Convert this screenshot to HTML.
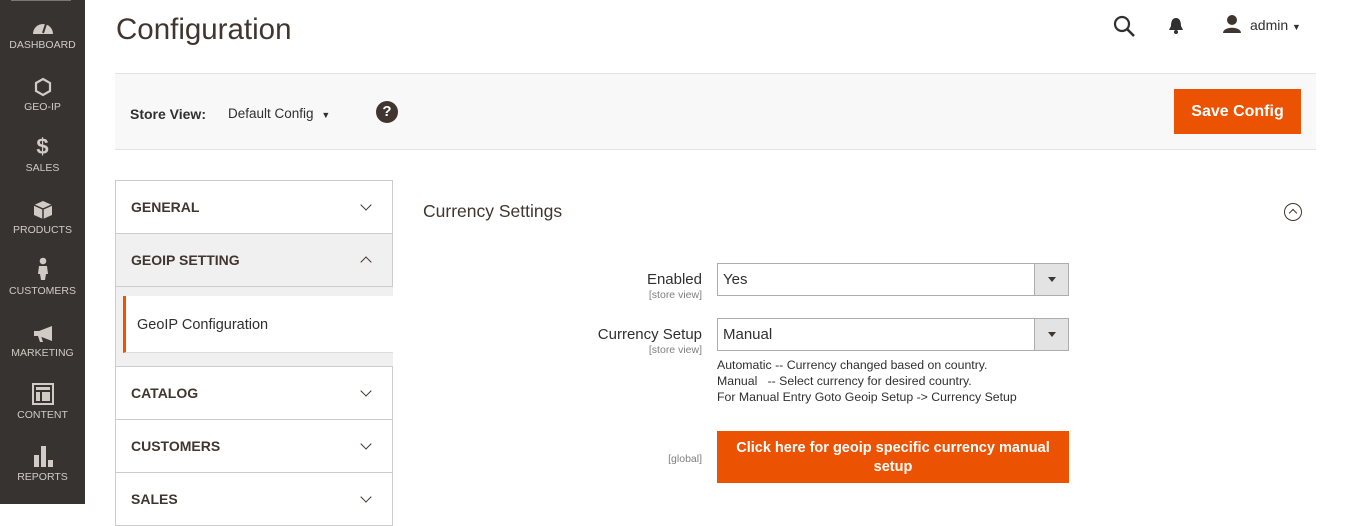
<!DOCTYPE html>
<html><head><meta charset="utf-8"><style>
*{box-sizing:border-box;margin:0;padding:0}
body{width:1349px;height:504px;overflow:hidden;background:#fff;font-family:"Liberation Sans",sans-serif;color:#303030;position:relative}
.side{position:absolute;left:0;top:0;width:85px;height:504px;background:#373330}
.side .top{position:absolute;left:11px;top:0;width:60px;height:1px;background:#777}
.nav{position:absolute;left:0;width:85px;text-align:center;color:#d0cbc5;font-size:10.5px}
.nav .ic{height:22px;display:flex;justify-content:center;align-items:flex-end;margin-bottom:4px}
h1{position:absolute;left:116px;top:13px;font-size:29.5px;font-weight:400;color:#41362f}
.bar{position:absolute;left:115px;top:73px;width:1201px;height:77px;background:#f8f8f8;border-top:1px solid #e3e3e3;border-bottom:1px solid #e3e3e3}
.btn{position:absolute;left:1174px;top:89px;width:127px;height:45px;background:#eb5202;color:#fff;font-weight:bold;font-size:16px;display:flex;align-items:center;justify-content:center}
.tabs{position:absolute;left:115px;top:180px;width:278px;border:1px solid #ccc;border-bottom:none}
.tab{height:53px;border-bottom:1px solid #ccc;font-weight:bold;font-size:14px;display:flex;align-items:center;padding-left:15px;position:relative;color:#41362f}
.tab .ch{position:absolute;right:22px;top:20px;width:8px;height:8px;border-right:1.5px solid #41362f;border-bottom:1.5px solid #41362f;transform:rotate(45deg)}
.tab .up{transform:rotate(-135deg);top:24px}
.lbl{position:absolute;text-align:right;right:647px;font-size:15px;color:#303030}
.sv{position:absolute;right:647px;font-size:10.5px;color:#808080}
.sel{position:absolute;left:717px;width:352px;height:33px;border:1px solid #adadad;font-size:15px;padding:7px 5px}
.sel .ar{position:absolute;right:0;top:0;width:34px;height:31px;background:#e3e3e3;border-left:1px solid #adadad}
.sel .ar:after{content:"";position:absolute;left:13px;top:13px;border:4px solid transparent;border-top:5px solid #41362f}
</style></head><body>
<div class="side"><div class="top"></div>
<div class="nav" style="top:13px"><div class="ic"><svg width="22" height="18" viewBox="0 0 22 18"><path d="M1 17A10 10 0 0 1 21 17Z" fill="#d0cbc5"/><path d="M11 16L14 7" stroke="#373330" stroke-width="2"/></svg></div>DASHBOARD</div>
<div class="nav" style="top:75px"><div class="ic"><svg width="18" height="20"><path d="M9 2L16 6V14L9 18L2 14V6Z" fill="none" stroke="#d0cbc5" stroke-width="2.2"/></svg></div>GEO-IP</div>
<div class="nav" style="top:136px"><div class="ic" style="font-size:22px;font-weight:bold;line-height:22px">$</div>SALES</div>
<div class="nav" style="top:198px"><div class="ic"><svg width="20" height="20"><path d="M10 1L19 5V15L10 19L1 15V5Z" fill="#d0cbc5"/><path d="M1 5L10 9L19 5M10 9V19" stroke="#373330" stroke-width="1.5" fill="none"/></svg></div>PRODUCTS</div>
<div class="nav" style="top:259px"><div class="ic"><svg width="12" height="24"><circle cx="6" cy="4" r="3.3" fill="#d0cbc5"/><path d="M2 9H10L11 17H9L8 23H4L3 17H1Z" fill="#d0cbc5"/></svg></div>CUSTOMERS</div>
<div class="nav" style="top:321px"><div class="ic"><svg width="22" height="18"><path d="M2 6H7L20 1V16L7 11H2Z" fill="#d0cbc5"/><path d="M6 11L8 17H11L9 11" fill="#d0cbc5"/></svg></div>MARKETING</div>
<div class="nav" style="top:383px"><div class="ic"><svg width="22" height="22"><rect x="1" y="1" width="20" height="20" fill="none" stroke="#d0cbc5" stroke-width="2"/><rect x="4" y="4" width="14" height="3" fill="#d0cbc5"/><rect x="4" y="9" width="4" height="9" fill="#d0cbc5"/><rect x="10" y="9" width="8" height="9" fill="#d0cbc5"/></svg></div>CONTENT</div>
<div class="nav" style="top:445px"><div class="ic"><svg width="20" height="22"><rect x="1" y="10" width="5" height="12" fill="#d0cbc5"/><rect x="8" y="1" width="5" height="21" fill="#d0cbc5"/><rect x="15" y="15" width="5" height="7" fill="#d0cbc5"/></svg></div>REPORTS</div>
</div>
<h1>Configuration</h1>
<svg style="position:absolute;left:1113px;top:15px" width="24" height="24"><circle cx="9" cy="9" r="7" fill="none" stroke="#303030" stroke-width="2.2"/><path d="M14 14L21 21" stroke="#303030" stroke-width="2.6"/></svg>
<svg style="position:absolute;left:1168px;top:17px" width="16" height="18"><path d="M8 1C4 1 3 5 3 9L1 13H15L13 9C13 5 12 1 8 1Z" fill="#303030"/><circle cx="8" cy="15" r="2" fill="#303030"/></svg>
<svg style="position:absolute;left:1222px;top:14px" width="20" height="20"><circle cx="10" cy="6" r="5" fill="#41362f"/><path d="M1 19C1 12 19 12 19 19Z" fill="#41362f"/></svg>
<div style="position:absolute;left:1250px;top:17px;font-size:14px">admin <span style="font-size:9px">▼</span></div>
<div class="bar"></div>
<div style="position:absolute;left:130px;top:106px;font-size:14px;font-weight:bold">Store View:</div>
<div style="position:absolute;left:228px;top:106px;font-size:13.5px">Default Config <span style="font-size:9px;margin-left:4px">▼</span></div>
<div style="position:absolute;left:376px;top:101px;width:22px;height:22px;border-radius:50%;background:#41362f;color:#fff;font-weight:bold;font-size:15px;text-align:center;line-height:22px">?</div>
<div class="btn">Save Config</div>
<div class="tabs">
<div class="tab">GENERAL<span class="ch"></span></div>
<div class="tab" style="background:#f0f0f0">GEOIP SETTING<span class="ch up"></span></div>
<div style="background:#f0f0f0;height:80px;border-bottom:1px solid #ccc;position:relative;margin-right:-1px">
<div style="position:absolute;left:7px;right:0;top:9px;height:57px;background:#fff;border-left:3px solid #eb5202;border-bottom:1px solid #ddd;font-size:14.5px;padding:21px 0 0 11px;color:#303030">GeoIP Configuration</div>
</div>
<div class="tab">CATALOG<span class="ch"></span></div>
<div class="tab">CUSTOMERS<span class="ch"></span></div>
<div class="tab">SALES<span class="ch"></span></div>
</div>
<div style="position:absolute;left:423px;top:201px;font-size:17.5px;color:#41362f">Currency Settings</div>
<div style="position:absolute;left:1284px;top:203px;width:18px;height:18px;border:1.3px solid #41362f;border-radius:50%"><div style="position:absolute;left:5px;top:6px;width:6px;height:6px;border-left:1.3px solid #41362f;border-top:1.3px solid #41362f;transform:rotate(45deg)"></div></div>
<div class="lbl" style="top:271px">Enabled</div><div class="sv" style="top:289px">[store view]</div>
<div class="sel" style="top:263px">Yes<span class="ar"></span></div>
<div class="lbl" style="top:326px">Currency Setup</div><div class="sv" style="top:344px">[store view]</div>
<div class="sel" style="top:318px">Manual<span class="ar"></span></div>
<div style="position:absolute;left:717px;top:357px;font-size:12.3px;line-height:16px;color:#303030">Automatic -- Currency changed based on country.<br>Manual &nbsp;&nbsp;-- Select currency for desired country.<br>For Manual Entry Goto Geoip Setup -&gt; Currency Setup</div>
<div class="sv" style="top:453px">[global]</div>
<div style="position:absolute;left:717px;top:431px;width:352px;height:52px;background:#eb5202;color:#fff;font-weight:bold;font-size:14.5px;text-align:center;padding-top:8px;line-height:19px">Click here for geoip specific currency manual<br>setup</div>
</body></html>
